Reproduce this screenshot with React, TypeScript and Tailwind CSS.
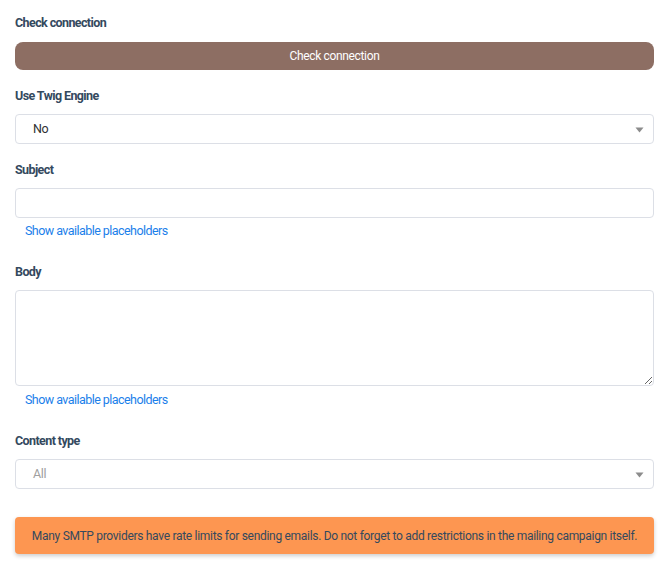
import React from "react";

function Label({ children, className = "" }: { children: React.ReactNode; className?: string }) {
  return (
    <div className={`h-5 pt-[1px] text-[12.5px] font-bold leading-5 tracking-[-0.6px] text-[#34495e] ${className}`}>
      {children}
    </div>
  );
}

function SelectBox({ value, muted }: { value: string; muted?: boolean }) {
  return (
    <div className="flex h-[30px] items-center justify-between rounded-[4px] border border-[#dcdfe6] bg-white pl-[17px] pr-[9px]">
      <span className={`text-[12.5px] tracking-[-0.3px] ${muted ? "text-[#a0a0a0]" : "text-[#303133]"}`}>{value}</span>
      <svg width="9" height="6" viewBox="0 0 9 6" className="mt-[2px]">
        <path d="M0.5 0.5 L8.5 0.5 L4.5 5.5 Z" fill="#8c8c8c" />
      </svg>
    </div>
  );
}

function Placeholders({ className = "" }: { className?: string }) {
  return (
    <div className={`h-5 pl-[10px] text-[12.5px] leading-5 tracking-[-0.55px] text-[#1b80ea] ${className}`}>
      Show available placeholders
    </div>
  );
}

export default function App() {
  return (
    <div className="min-h-screen w-[670px] bg-white pl-[15px] pr-[16px] pt-[12px] font-['Roboto',sans-serif]">
      <Label className="mb-[10px]">Check connection</Label>
      <button className="flex h-[28px] w-full items-center justify-center rounded-[8px] bg-[#8d6e63] text-[12px] tracking-[-0.35px] text-white">
        Check connection
      </button>

      <Label className="mt-[15px] mb-[9px]">Use Twig Engine</Label>
      <SelectBox value="No" />

      <Label className="mt-[15px] mb-[9px]">Subject</Label>
      <input className="block h-[30px] w-full rounded-[4px] border border-[#dcdfe6] bg-white outline-none" />
      <Placeholders className="mt-[3px]" />

      <Label className="mt-[20px] mb-[9px]">Body</Label>
      <textarea className="block h-[96px] w-full rounded-[4px] border border-[#dcdfe6] bg-white outline-none" />
      <Placeholders className="mt-[4px]" />

      <Label className="mt-[20px] mb-[9px]">Content type</Label>
      <SelectBox value="All" muted />

      <div className="mt-[28px] flex h-[37px] items-center justify-center whitespace-nowrap rounded-[4px] bg-[#fd9651] text-[12px] tracking-[-0.3px] text-[#34495e] shadow-[0_2px_4px_rgba(0,0,0,0.2)]">
        Many SMTP providers have rate limits for sending emails. Do not forget to add restrictions in the mailing campaign itself.
      </div>
    </div>
  );
}
